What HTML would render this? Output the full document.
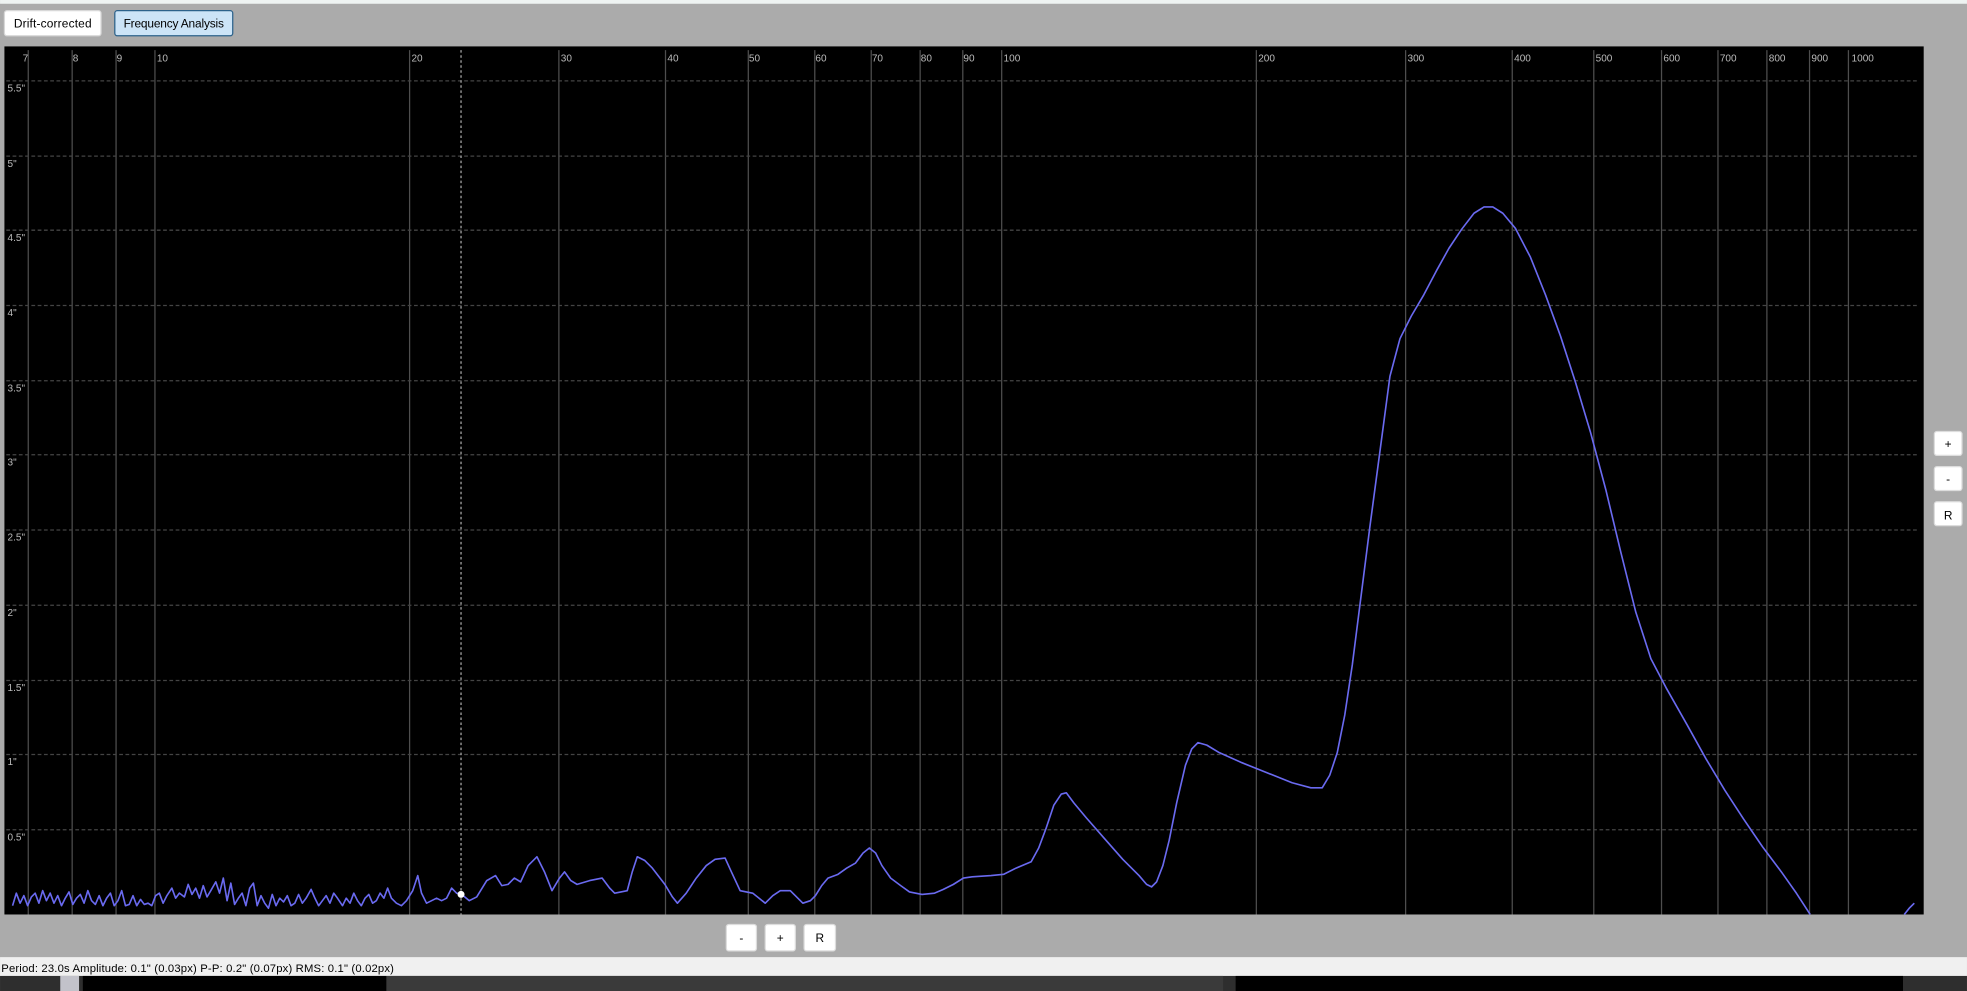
<!DOCTYPE html>
<html><head><meta charset="utf-8"><style>
html,body{margin:0;padding:0;background:#ababab;overflow:hidden}
svg{display:block}
text{font-family:"Liberation Sans",sans-serif}
</style></head><body>
<svg width="1967" height="991" viewBox="0 0 1568 790" xmlns="http://www.w3.org/2000/svg">
<rect x="0" y="0" width="1568" height="790" fill="#ababab"/>
<rect x="0" y="0" width="1568" height="3" fill="#eef3f2"/>
<rect x="3.5" y="8.5" width="77" height="20" rx="2" fill="#fff" stroke="#d8d8d8"/>
<text x="42" y="22" font-size="9.5" text-anchor="middle" fill="#000" textLength="62">Drift-corrected</text>
<rect x="91.5" y="8.5" width="94" height="20" rx="2" fill="#cce4f7" stroke="#2c628b"/>
<text x="138.5" y="22" font-size="9.5" text-anchor="middle" fill="#000" textLength="80">Frequency Analysis</text>
<rect x="3.5" y="37" width="1530" height="692" fill="#000"/>
<g stroke="#4e4e4e" stroke-width="1">
<line x1="22.5" y1="40" x2="22.5" y2="729"/><line x1="57.5" y1="40" x2="57.5" y2="729"/><line x1="92.5" y1="40" x2="92.5" y2="729"/><line x1="123.5" y1="40" x2="123.5" y2="729"/><line x1="326.5" y1="40" x2="326.5" y2="729"/><line x1="445.5" y1="40" x2="445.5" y2="729"/><line x1="530.5" y1="40" x2="530.5" y2="729"/><line x1="596.5" y1="40" x2="596.5" y2="729"/><line x1="649.5" y1="40" x2="649.5" y2="729"/><line x1="694.5" y1="40" x2="694.5" y2="729"/><line x1="733.5" y1="40" x2="733.5" y2="729"/><line x1="767.5" y1="40" x2="767.5" y2="729"/><line x1="798.5" y1="40" x2="798.5" y2="729"/><line x1="1001.5" y1="40" x2="1001.5" y2="729"/><line x1="1120.5" y1="40" x2="1120.5" y2="729"/><line x1="1205.5" y1="40" x2="1205.5" y2="729"/><line x1="1270.5" y1="40" x2="1270.5" y2="729"/><line x1="1324.5" y1="40" x2="1324.5" y2="729"/><line x1="1369.5" y1="40" x2="1369.5" y2="729"/><line x1="1408.5" y1="40" x2="1408.5" y2="729"/><line x1="1442.5" y1="40" x2="1442.5" y2="729"/><line x1="1473.5" y1="40" x2="1473.5" y2="729"/>
</g>
<g stroke="#444" stroke-width="1" stroke-dasharray="3,2">
<line x1="5" y1="64.5" x2="1528" y2="64.5"/><line x1="5" y1="124.5" x2="1528" y2="124.5"/><line x1="5" y1="183.5" x2="1528" y2="183.5"/><line x1="5" y1="243.5" x2="1528" y2="243.5"/><line x1="5" y1="303.5" x2="1528" y2="303.5"/><line x1="5" y1="362.5" x2="1528" y2="362.5"/><line x1="5" y1="422.5" x2="1528" y2="422.5"/><line x1="5" y1="482.5" x2="1528" y2="482.5"/><line x1="5" y1="542.5" x2="1528" y2="542.5"/><line x1="5" y1="601.5" x2="1528" y2="601.5"/><line x1="5" y1="661.5" x2="1528" y2="661.5"/>
</g>
<line x1="367.5" y1="40" x2="367.5" y2="729" stroke="#aaa" stroke-dasharray="2,2"/>
<g font-size="8" fill="#bbb">
<text x="18" y="49">7</text><text x="58" y="49">8</text><text x="93" y="49">9</text><text x="125" y="49">10</text><text x="328" y="49">20</text><text x="447" y="49">30</text><text x="532" y="49">40</text><text x="597" y="49">50</text><text x="650" y="49">60</text><text x="695" y="49">70</text><text x="734" y="49">80</text><text x="768" y="49">90</text><text x="800" y="49">100</text><text x="1003" y="49">200</text><text x="1122" y="49">300</text><text x="1207" y="49">400</text><text x="1272" y="49">500</text><text x="1326" y="49">600</text><text x="1371" y="49">700</text><text x="1410" y="49">800</text><text x="1444" y="49">900</text><text x="1476" y="49">1000</text>
<text x="6" y="73">5.5"</text><text x="6" y="133">5"</text><text x="6" y="192">4.5"</text><text x="6" y="252">4"</text><text x="6" y="312">3.5"</text><text x="6" y="371">3"</text><text x="6" y="431">2.5"</text><text x="6" y="491">2"</text><text x="6" y="551">1.5"</text><text x="6" y="610">1"</text><text x="6" y="670">0.5"</text>
</g>
<polyline fill="none" stroke="#6a6af0" stroke-width="1.3" stroke-linejoin="round" points="10,722 13,712 16,720 19,714 22,722 25,715 28,712 31,720 34,710 37,718 40,712 43,720 46,714 49,722 52,716 55,711 58,721 61,716 64,713 67,720 70,710 73,718 76,721 79,714 82,722 85,716 88,712 91,722 94,718 97,710 100,722 103,721 106,714 109,722 112,717 115,721 118,720 121,722 124,714 127,712 130,720 133,714 137,708 140,716 143,712 147,715 150,705 153,713 156,708 159,716 162,706 165,715 168,710 172,703 175,712 178,700 181,718 184,704 187,721 190,716 193,712 196,722 199,708 202,704 205,722 208,714 211,720 214,724 217,713 220,722 223,716 226,719 229,714 232,722 235,720 238,713 241,720 244,716 248,709 251,716 254,722 257,718 260,714 263,720 266,712 269,716 273,722 276,716 279,720 282,712 285,718 288,722 291,716 294,713 297,720 300,718 303,712 306,716 309,708 312,716 316,720 320,722 324,718 329,710 333,698 336,712 340,720 344,718 348,716 352,718 356,716 360,708 364,712 368,713 374,718 380,715 388,702 395,698 400,706 405,705 410,700 415,703 421,690 428,683 434,695 440,710 446,700 450,695 455,702 460,705 470,702 480,700 486,708 490,712 500,710 504,695 508,683 514,686 520,692 530,705 536,715 540,720 547,712 555,700 563,690 570,685 578,684 583,695 590,710 600,712 605,716 610,720 616,714 622,710 630,710 635,715 640,720 646,718 650,714 655,706 660,700 668,697 675,692 682,688 688,680 693,676 698,680 703,690 710,700 718,706 725,711 735,713 745,712 752,709 760,705 768,700 775,699 790,698 800,697 810,692 822,687 828,676 834,660 840,642 846,633 850,632 856,640 866,652 880,668 895,685 908,698 914,705 918,707 922,703 927,690 932,670 938,640 945,610 950,597 955,592 962,594 972,600 990,608 1010,616 1030,624 1045,628 1054,628 1060,618 1066,600 1072,570 1078,530 1085,475 1092,420 1100,360 1108,300 1116,270 1125,252 1135,235 1145,216 1155,198 1165,183 1175,170 1183,165 1190,165 1198,170 1208,182 1220,205 1232,235 1244,268 1256,305 1268,345 1280,390 1292,440 1304,488 1316,525 1328,548 1345,578 1360,605 1375,630 1390,653 1405,675 1420,695 1432,712 1443,729"/>
<polyline fill="none" stroke="#6a6af0" stroke-width="1.3" points="1518,729 1522,724 1526,720"/>
<circle cx="367.5" cy="713" r="2.8" fill="#fff"/>
<g font-size="9.5" text-anchor="middle" fill="#000">
<rect x="1542" y="344" width="22" height="19" rx="2" fill="#fff" stroke="#ddd"/><text x="1553" y="357">+</text>
<rect x="1542" y="372" width="22" height="19" rx="2" fill="#fff" stroke="#ddd"/><text x="1553" y="385">-</text>
<rect x="1542" y="400" width="22" height="19" rx="2" fill="#fff" stroke="#ddd"/><text x="1553" y="414">R</text>
<rect x="579" y="737" width="24" height="21" rx="2" fill="#fff" stroke="#ddd"/><text x="591" y="751">-</text>
<rect x="610" y="737" width="24" height="21" rx="2" fill="#fff" stroke="#ddd"/><text x="622" y="751">+</text>
<rect x="641" y="737" width="25" height="21" rx="2" fill="#fff" stroke="#ddd"/><text x="653.5" y="751">R</text>
</g>
<rect x="0" y="763" width="1568" height="15" fill="#f0f0f0"/>
<text x="1" y="775" font-size="9" fill="#000" textLength="313">Period: 23.0s  Amplitude: 0.1" (0.03px)  P-P: 0.2" (0.07px)  RMS: 0.1" (0.02px)</text>
<rect x="0" y="778" width="1568" height="12" fill="#2e2e2e"/>
<rect x="48" y="778" width="15" height="12" fill="#c2c2ca"/>
<rect x="66" y="778" width="242" height="12" fill="#000"/>
<rect x="308" y="778" width="667" height="12" fill="#3a3a3a"/>
<rect x="985" y="778" width="532" height="12" fill="#000"/>
</svg>
</body></html>
